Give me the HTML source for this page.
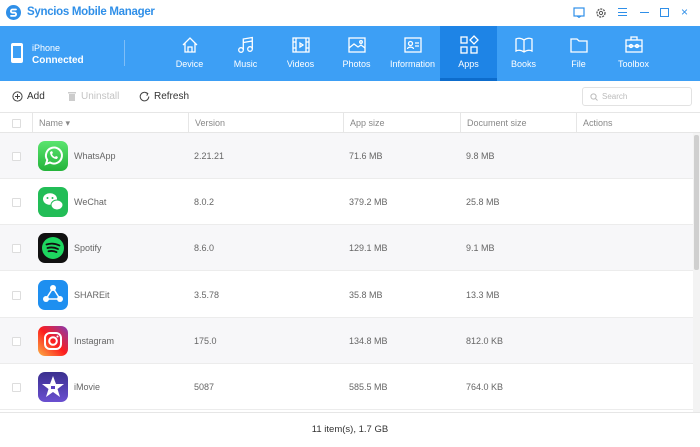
<!DOCTYPE html>
<html><head><meta charset="utf-8"><style>
*{margin:0;padding:0;box-sizing:border-box}
body{width:700px;height:446px;overflow:hidden;background:#fff;font-family:"Liberation Sans",sans-serif;position:relative;color:#555}
.abs{position:absolute}
.title{top:0;left:0;width:700px;height:26px;background:#fff}
.hdr{top:26px;left:0;width:700px;height:55px;background:#3d9ff5}
.tab{position:absolute;top:0;height:55px;width:57px;text-align:center;color:#fff;font-size:9px}
.tab svg{position:absolute;left:50%;margin-left:-10px;top:9px}
.tab span{position:absolute;left:0;right:0;top:33px}
.tab.act{background:#1e84e6;border-bottom:3px solid #0d6ccc}
.tb{top:81px;left:0;width:700px;height:31px;background:#fff;font-size:10px}
.th{top:112px;left:0;width:700px;height:21px;border-top:1px solid #e6e6e6;border-bottom:1px solid #e6e6e6;font-size:9px;color:#888;background:#fff}
.th div{position:absolute;top:0;height:20px;line-height:20px;border-left:1px solid #e6e6e6;padding-left:6px}
.cb{position:absolute;width:9px;height:9px;border:1px solid #ddd;background:#fff;border-radius:1px}
.row{position:absolute;left:0;width:693px;height:46px;border-bottom:1px solid #ececec;font-size:9px;color:#666}
.row .t{position:absolute;top:0;line-height:46px}
.ic{position:absolute;left:38px;top:8px;width:30px;height:30px;border-radius:7px;overflow:hidden}
</style></head><body>
<div class="abs title">
 <svg class="abs" style="left:6px;top:5px" width="15" height="15" viewBox="0 0 15 15"><circle cx="7.5" cy="7.5" r="7.5" fill="#2f8fe8"/><path d="M10 4.5H6.5a1.6 1.6 0 0 0 0 3.2h2a1.6 1.6 0 0 1 0 3.2H5" stroke="#fff" stroke-width="1.8" fill="none" stroke-linecap="round"/></svg>
 <div class="abs" style="left:27px;top:6px;font-size:11.5px;color:#2f8fe8;font-weight:bold;letter-spacing:-0.3px">Syncios Mobile Manager</div>
 <svg class="abs" style="left:573px;top:7px" width="12" height="11"><rect x="1" y="1" width="10" height="8" fill="none" stroke="#2f8fe8" stroke-width="1.2"/><path d="M4 9l2 1.5 2-1.5" stroke="#2f8fe8" fill="none"/></svg>
 <svg class="abs" style="left:595px;top:7px" width="12" height="12"><circle cx="6" cy="6" r="4" fill="none" stroke="#555" stroke-width="1.3" stroke-dasharray="2 1"/><circle cx="6" cy="6" r="1.6" fill="none" stroke="#555"/></svg>
 <div class="abs" style="left:618px;top:8px;width:9px;height:8px;border-top:1px solid #2f8fe8;border-bottom:1px solid #2f8fe8"><div style="margin-top:2.5px;border-top:1px solid #2f8fe8"></div></div>
 <div class="abs" style="left:640px;top:12px;width:9px;border-top:1px solid #2f8fe8"></div>
 <div class="abs" style="left:660px;top:8px;width:9px;height:9px;border:1px solid #2f8fe8"></div>
 <div class="abs" style="left:681px;top:5px;font-size:12px;color:#2f8fe8">×</div>
</div>
<div class="abs hdr">
 <svg class="abs" style="left:10px;top:16px" width="14" height="22"><rect x="1" y="1" width="12" height="20" rx="2" fill="#fff"/><rect x="3" y="4" width="8" height="12" fill="#3d9ff5"/></svg>
 <div class="abs" style="left:32px;top:17px;font-size:9px;color:#fff">iPhone</div>
 <div class="abs" style="left:32px;top:29px;font-size:10px;color:#fff;font-weight:bold">Connected</div>
 <div class="abs" style="left:124px;top:14px;height:26px;border-left:1px solid #7fbef7"></div>
 <div class="tab" style="left:161px"><svg width="20" height="20" viewBox="0 0 20 20" fill="none" stroke="#fff" stroke-width="1.3"><path d="M3 10L10 3l7 7M5 8v9h10V8M8 17v-5h4v5"/></svg><span>Device</span></div>
 <div class="tab" style="left:217px"><svg width="20" height="20" viewBox="0 0 20 20" fill="none" stroke="#fff" stroke-width="1.3"><circle cx="5" cy="15" r="2.3"/><circle cx="14" cy="14" r="2.3"/><path d="M7.3 15V4l9-1.5V14M7.3 7.5l9-1.5"/></svg><span>Music</span></div>
 <div class="tab" style="left:272px"><svg width="20" height="20" viewBox="0 0 20 20" fill="none" stroke="#fff" stroke-width="1.3"><rect x="2" y="3" width="16" height="14"/><path d="M5 3v14M15 3v14M2 7h3M2 13h3M15 7h3M15 13h3M9 8l3 2-3 2z"/></svg><span>Videos</span></div>
 <div class="tab" style="left:328px"><svg width="20" height="20" viewBox="0 0 20 20" fill="none" stroke="#fff" stroke-width="1.3"><rect x="2" y="3" width="16" height="14"/><path d="M2 13l5-4 4 3 3-2 4 3"/><circle cx="14" cy="7" r="1.3"/></svg><span>Photos</span></div>
 <div class="tab" style="left:384px"><svg width="20" height="20" viewBox="0 0 20 20" fill="none" stroke="#fff" stroke-width="1.3"><rect x="2" y="3" width="16" height="14"/><circle cx="7.5" cy="8.5" r="2"/><path d="M4.5 14c0-2.5 6-2.5 6 0M12 8h4M12 11h4"/></svg><span>Information</span></div>
 <div class="tab act" style="left:440px"><svg width="20" height="20" viewBox="0 0 20 20" fill="none" stroke="#fff" stroke-width="1.3"><rect x="2" y="2" width="6" height="6"/><rect x="2" y="12" width="6" height="6"/><rect x="12" y="12" width="6" height="6"/><path d="M15 1l4 4-4 4-4-4z"/></svg><span>Apps</span></div>
 <div class="tab" style="left:495px"><svg width="20" height="20" viewBox="0 0 20 20" fill="none" stroke="#fff" stroke-width="1.3"><path d="M10 5C7 3 4 3 2 4v12c2-1 5-1 8 1 3-2 6-2 8-1V4c-2-1-5-1-8 1zM10 5v12"/></svg><span>Books</span></div>
 <div class="tab" style="left:550px"><svg width="20" height="20" viewBox="0 0 20 20" fill="none" stroke="#fff" stroke-width="1.3"><path d="M2 4h6l2 2h8v11H2z"/></svg><span>File</span></div>
 <div class="tab" style="left:605px"><svg width="20" height="20" viewBox="0 0 20 20" fill="none" stroke="#fff" stroke-width="1.3"><rect x="2" y="5" width="16" height="12"/><path d="M7 5V2h6v3M2 11h16"/><circle cx="7" cy="11" r="1.5"/><circle cx="13" cy="11" r="1.5"/></svg><span>Toolbox</span></div>
</div>
<div class="abs tb">
 <svg class="abs" style="left:12px;top:10px" width="11" height="11"><circle cx="5.5" cy="5.5" r="4.6" fill="none" stroke="#444"/><path d="M5.5 3v5M3 5.5h5" stroke="#444"/></svg>
 <div class="abs" style="left:27px;top:10px;color:#333">Add</div>
 <svg class="abs" style="left:67px;top:10px" width="10" height="11"><rect x="2" y="3" width="6" height="7" fill="#ccc"/><rect x="1" y="1" width="8" height="1.5" fill="#ccc"/></svg>
 <div class="abs" style="left:81px;top:10px;color:#c4c4c4">Uninstall</div>
 <svg class="abs" style="left:139px;top:10px" width="11" height="11"><path d="M8.5 2.5A4.3 4.3 0 1 0 9.8 5.5" fill="none" stroke="#444"/><path d="M6.5 1.5l2.3 1-1 2.2" fill="none" stroke="#444"/></svg>
 <div class="abs" style="left:154px;top:10px;color:#333">Refresh</div>
 <div class="abs" style="left:582px;top:6px;width:110px;height:19px;border:1px solid #e2e2e2;border-radius:3px;font-size:8px;color:#bbb;line-height:17px;padding-left:19px">Search<svg class="abs" style="left:7px;top:5px" width="8" height="8"><circle cx="3.5" cy="3.5" r="2.6" fill="none" stroke="#bbb"/><path d="M5.5 5.5l2 2" stroke="#bbb"/></svg></div>
</div>
<div class="abs th">
 <span class="cb" style="left:12px;top:6px"></span>
 <div style="left:32px;width:156px">Name ▾</div>
 <div style="left:188px;width:155px">Version</div>
 <div style="left:343px;width:117px">App size</div>
 <div style="left:460px;width:116px">Document size</div>
 <div style="left:576px;width:124px">Actions</div>
</div>

<div class="row" style="top:133px;background:#f7f7f9"><span class="cb" style="left:12px;top:19px"></span>
 <div class="ic" style="background:linear-gradient(#5be46f,#23b33a)"><svg width="30" height="30"><path d="M8 23l1.3-4A8 8 0 1 1 12 21.5z" fill="none" stroke="#fff" stroke-width="2"/><path d="M12 11c0 4 3 7 7 7l1-2-2-1-1 1c-1.5-.5-2.5-1.5-3-3l1-1-1-2z" fill="#fff"/></svg></div>
 <span class="t" style="left:74px">WhatsApp</span><span class="t" style="left:194px">2.21.21</span><span class="t" style="left:349px">71.6 MB</span><span class="t" style="left:466px">9.8 MB</span></div>
<div class="row" style="top:179px;background:#fff"><span class="cb" style="left:12px;top:19px"></span>
 <div class="ic" style="background:#22bd57"><svg width="30" height="30"><ellipse cx="12" cy="12" rx="7" ry="5.8" fill="#fff"/><ellipse cx="19" cy="18" rx="6" ry="5" fill="#fff" stroke="#22bd57"/><circle cx="9.5" cy="11" r="1" fill="#22bd57"/><circle cx="14.5" cy="11" r="1" fill="#22bd57"/></svg></div>
 <span class="t" style="left:74px">WeChat</span><span class="t" style="left:194px">8.0.2</span><span class="t" style="left:349px">379.2 MB</span><span class="t" style="left:466px">25.8 MB</span></div>
<div class="row" style="top:225px;background:#f7f7f9"><span class="cb" style="left:12px;top:19px"></span>
 <div class="ic" style="background:#111"><svg width="30" height="30"><circle cx="15" cy="15" r="11" fill="#1ed760"/><path d="M8.5 11.5c4-1.3 9-1 13 1M9.5 15c3.5-1 7-.7 10.5 1M10.5 18.3c3-.7 5.5-.5 8 .8" stroke="#111" stroke-width="1.8" fill="none" stroke-linecap="round"/></svg></div>
 <span class="t" style="left:74px">Spotify</span><span class="t" style="left:194px">8.6.0</span><span class="t" style="left:349px">129.1 MB</span><span class="t" style="left:466px">9.1 MB</span></div>
<div class="row" style="top:272px;background:#fff"><span class="cb" style="left:12px;top:19px"></span>
 <div class="ic" style="background:#1e8ff0"><svg width="30" height="30"><path d="M15 8L8 19h14z" fill="none" stroke="#fff" stroke-width="1.5"/><circle cx="15" cy="8" r="3" fill="#fff"/><circle cx="8" cy="19" r="3" fill="#fff"/><circle cx="22" cy="19" r="3" fill="#fff"/></svg></div>
 <span class="t" style="left:74px">SHAREit</span><span class="t" style="left:194px">3.5.78</span><span class="t" style="left:349px">35.8 MB</span><span class="t" style="left:466px">13.3 MB</span></div>
<div class="row" style="top:318px;background:#f7f7f9"><span class="cb" style="left:12px;top:19px"></span>
 <div class="ic" style="background:linear-gradient(45deg,#fcb045,#fd1d1d 50%,#833ab4)"><svg width="30" height="30"><rect x="7" y="7" width="16" height="16" rx="5" fill="none" stroke="#fff" stroke-width="2"/><circle cx="15" cy="15" r="3.8" fill="none" stroke="#fff" stroke-width="2"/><circle cx="19.5" cy="10.5" r="1" fill="#fff"/></svg></div>
 <span class="t" style="left:74px">Instagram</span><span class="t" style="left:194px">175.0</span><span class="t" style="left:349px">134.8 MB</span><span class="t" style="left:466px">812.0 KB</span></div>
<div class="row" style="top:364px;background:#fff"><span class="cb" style="left:12px;top:19px"></span>
 <div class="ic" style="background:linear-gradient(#3a2f8f,#6a4fd0)"><svg width="30" height="30"><path d="M15 4l3 8h8l-6.5 5 2.5 8-7-5-7 5 2.5-8L4 12h8z" fill="#fff"/><rect x="13" y="14" width="4" height="3" fill="#5a3fc0"/></svg></div>
 <span class="t" style="left:74px">iMovie</span><span class="t" style="left:194px">5087</span><span class="t" style="left:349px">585.5 MB</span><span class="t" style="left:466px">764.0 KB</span></div>

<div class="abs" style="left:693px;top:133px;width:7px;height:279px;background:#f3f3f3"><div style="margin:2px 1px;height:135px;background:#cfcfcf;border-radius:2px"></div></div>
<div class="abs" style="left:0;top:412px;width:700px;height:34px;border-top:1px solid #e6e6e6;background:#fff;font-size:9.5px;color:#333;text-align:center;line-height:34px">11 item(s), 1.7 GB</div>
</body></html>
